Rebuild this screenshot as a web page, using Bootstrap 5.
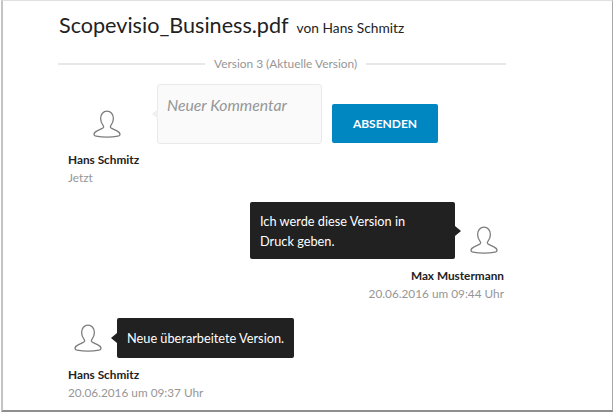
<!DOCTYPE html>
<html lang="de">
<head>
<meta charset="utf-8">
<title>Scopevisio_Business.pdf</title>
<link href="https://cdn.jsdelivr.net/npm/bootstrap@5.3.0/dist/css/bootstrap.min.css" rel="stylesheet">
<style>
html,body{height:414px;overflow:hidden;background:#fff}
body{font-family:Lato,"Liberation Sans",sans-serif;color:#222;padding:0 1px 0 1px}
.shot-win{height:412px;border:1px solid #e0e0e0;border-left:2px solid #c4c4c4;border-right-color:#a8a8a8;border-bottom:2px solid #8e8e8e;background:#fff;padding:10px 0 0 55px}
.shot-col{width:448px}
.doc-title{font-size:21.6px;font-weight:400;line-height:28px;margin:0 0 0 1px;color:#222}
.doc-by{font-size:13.75px;margin-left:8px}
.ver-line{height:2px;background:#e8e8e8;flex:1}
.ver-line-l{flex:0 0 147px}
.ver-text{font-size:11.9px;color:#969696;line-height:16px;margin:0 9px}
.ver-row{margin-top:17px}
.avatar-i{width:28px;height:28px;display:block}
.avatar-new{margin-top:26px}
.comment-new{margin-top:12px;height:67px}
.who-a{width:79px;margin-left:10px;padding-right:2px}
.comment-box{position:relative;width:165px;height:60px;background:#fafafa;border:1px solid #e9e9e9;border-radius:3px;padding:8px 9px;font-size:15.75px;font-style:italic;color:#969696;margin-left:10px;line-height:24px}
.nub-l::before{content:"";position:absolute;left:-6px;top:50%;margin-top:-5px;border:5px solid transparent;border-left:0;border-right:6px solid #212121}
.comment-box.nub-l::before{border-right-color:#f0f0f0}
.send-btn{width:106px;height:39px;margin-left:10px;margin-top:20px;background:#0086c1;border:0;border-radius:2px;color:#fff;font-size:12px;font-weight:700;padding:0}
.send-btn:hover{background:#0086c1;color:#fff}
.who-name{font-size:11.8px;font-weight:700;line-height:18px;color:#222}
.who-date{font-size:11.8px;line-height:18px;color:#969696}
.who-block{margin-left:10px}
.bubble-dark{position:relative;background:#212121;color:#fff;border-radius:2px;font-size:12.75px;line-height:20px}
.nub-r::after{content:"";position:absolute;right:-6px;top:50%;margin-top:-5px;border:5px solid transparent;border-right:0;border-left:6px solid #212121}
.bubble-a{width:205px;padding:9px 40px 9px 10px;height:57px}
.bubble-b{width:177px;padding:10px;height:40px;margin-left:15px;white-space:nowrap}
.row-right{margin-top:15px;padding-right:2px}
.row-last{margin-top:15px;margin-left:16px}
.row-avatar-r{margin:24px 6px 0 15px}
.row-avatar-l{margin-top:6px}
.meta-r{margin-top:8px;padding-right:2px}
.meta-l{margin-top:8px}
</style>
</head>
<body>
<svg width="0" height="0" class="d-block position-absolute">
<symbol id="person" viewBox="0 0 28 28"><path d="M10.200 15.600c-1.600-2-2.600-4.400-2.600-7.100C7.600 4.200 10.300 1.200 14 1.200s6.400 3 6.400 7.300c0 2.700-1 5.100-2.600 7.100-.9 1.100-.3 2.100.9 2.700l5.200 2.500c1.900.9 3.100 2.300 3.100 3.600 0 .8-.7 1.400-2.100 1.700-2.500.5-7.200 1-10.900 1s-8.400-.5-10.900-1c-1.400-.3-2.100-.9-2.100-1.700 0-1.300 1.200-2.700 3.100-3.600l5.200-2.500c1.200-.6 1.800-1.600.9-2.700z" fill="none" stroke="#7d7d7d" stroke-width="1.300"/></symbol>
</svg>
<div class="shot-win">
  <div class="shot-col">
    <div class="d-flex align-items-baseline">
      <h1 class="doc-title">Scopevisio_Business.pdf</h1><span class="doc-by">von Hans Schmitz</span>
    </div>
    <div class="ver-row d-flex align-items-center"><div class="ver-line ver-line-l"></div><span class="ver-text">Version 3 (Aktuelle Version)</span><div class="ver-line"></div></div>

    <div class="comment-new d-flex align-items-start">
      <div class="who-a d-flex justify-content-center"><svg class="avatar-i avatar-new"><use href="#person"/></svg></div>
      <div class="comment-box nub-l">Neuer Kommentar</div>
      <button type="button" class="btn send-btn">ABSENDEN</button>
    </div>
    <div class="who-block">
      <div class="who-name">Hans Schmitz</div>
      <div class="who-date">Jetzt</div>
    </div>

    <div class="row-right d-flex justify-content-end align-items-start">
      <div class="bubble-dark bubble-a nub-r">Ich werde diese Version in Druck geben.</div>
      <svg class="avatar-i row-avatar-r"><use href="#person"/></svg>
    </div>
    <div class="meta-r text-end">
      <div class="who-name">Max Mustermann</div>
      <div class="who-date">20.06.2016 um 09:44 Uhr</div>
    </div>

    <div class="row-last d-flex align-items-start">
      <svg class="avatar-i row-avatar-l"><use href="#person"/></svg>
      <div class="bubble-dark bubble-b nub-l">Neue überarbeitete Version.</div>
    </div>
    <div class="who-block meta-l">
      <div class="who-name">Hans Schmitz</div>
      <div class="who-date">20.06.2016 um 09:37 Uhr</div>
    </div>
  </div>
</div>
<script src="https://cdn.jsdelivr.net/npm/bootstrap@5.3.0/dist/js/bootstrap.bundle.min.js"></script>
</body>
</html>
